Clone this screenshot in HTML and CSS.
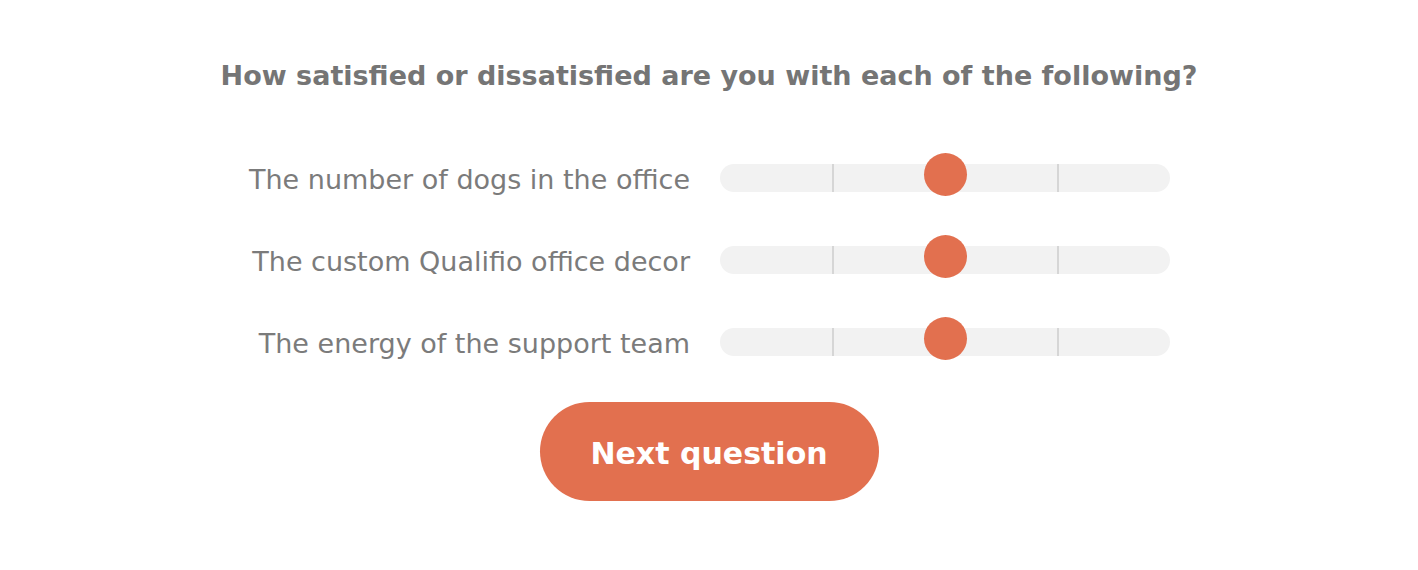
FILE: index.html
```html
<!DOCTYPE html>
<html lang="en">
<head>
    <meta charset="UTF-8">
    <meta name="viewport" content="width=device-width, initial-scale=1.0">
    <title>Survey</title>
    <link rel="stylesheet" href="styles.css">
</head>
<body>
    <main class="survey">
        <h1 class="question">How satisfied or dissatisfied are you with each of the following?</h1>
        <div class="matrix">
            <div class="row">
                <label class="row-label">The number of dogs in the office</label>
                <div class="track">
                    <span class="tick tick-left"></span>
                    <span class="tick tick-right"></span>
                    <span class="thumb"></span>
                </div>
            </div>
            <div class="row">
                <label class="row-label">The custom Qualifio office decor</label>
                <div class="track">
                    <span class="tick tick-left"></span>
                    <span class="tick tick-right"></span>
                    <span class="thumb"></span>
                </div>
            </div>
            <div class="row">
                <label class="row-label">The energy of the support team</label>
                <div class="track">
                    <span class="tick tick-left"></span>
                    <span class="tick tick-right"></span>
                    <span class="thumb"></span>
                </div>
            </div>
        </div>
        <div class="actions">
            <button class="next-btn">Next question</button>
        </div>
    </main>
</body>
</html>
```
FILE: styles.css
```css
body {
    font-family: 'DejaVu Sans', sans-serif;
    margin: 0;
    padding: 0;
    background: white;
    color: #777;
}
.survey {
    display: flex;
    flex-direction: column;
    align-items: center;
    padding-top: 60px;
}
.question {
    margin: 0;
    font-size: 27px;
    line-height: 32px;
    font-weight: bold;
    color: #757575;
    text-align: center;
}
.matrix {
    display: flex;
    flex-direction: column;
    gap: 54px;
    margin-top: 70px;
    padding-right: 8px;
}
.row {
    display: grid;
    grid-template-columns: 450px 450px;
    column-gap: 30px;
    align-items: center;
    height: 28px;
}
.row-label {
    padding-top: 4px;
    font-size: 27px;
    line-height: 28px;
    text-align: right;
    white-space: nowrap;
    color: #7b7b7b;
}
.track {
    position: relative;
    height: 28px;
    background-color: #f2f2f2;
    border-radius: 14px;
}
.tick {
    position: absolute;
    top: 0;
    width: 2px;
    height: 100%;
    background-color: #d6d6d6;
}
.tick-left {
    left: calc(25% - 1px);
}
.tick-right {
    left: calc(75% - 1px);
}
.thumb {
    position: absolute;
    top: -11px;
    left: calc(50% - 21.5px);
    width: 43px;
    height: 43px;
    border-radius: 50%;
    background-color: #e2704f;
}
.actions {
    margin-top: 48px;
}
.next-btn {
    width: 339px;
    height: 99px;
    padding: 4px 0 0;
    border: none;
    border-radius: 50px;
    background-color: #e2704f;
    color: white;
    font-family: 'DejaVu Sans', sans-serif;
    font-size: 30px;
    font-weight: bold;
    cursor: pointer;
}
```
